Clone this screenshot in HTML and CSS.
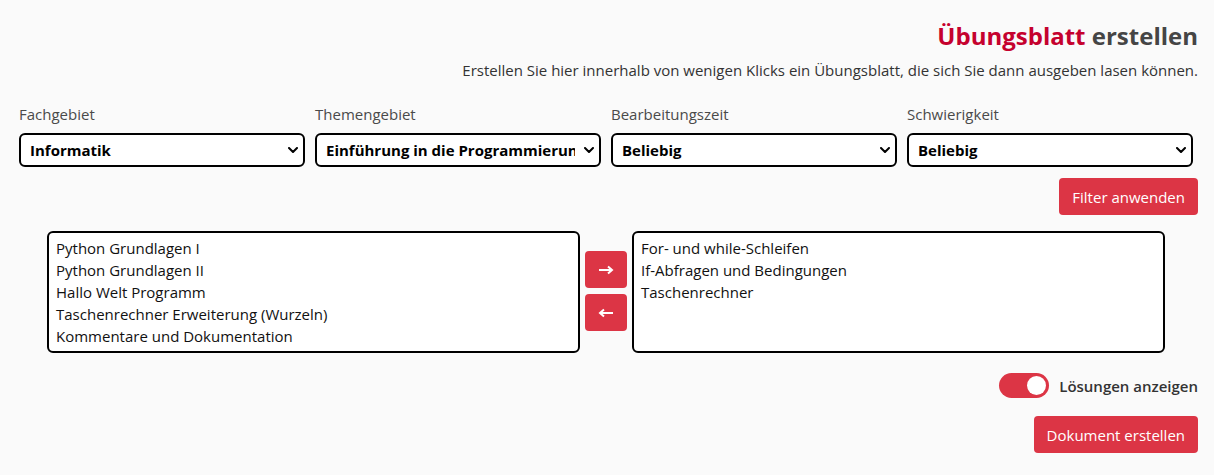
FILE: index.html
```html
<!DOCTYPE html>
<html lang="de">
<head>
<meta charset="utf-8">
<title>Übungsblatt erstellen</title>
<link rel="stylesheet" href="styles.css">
</head>
<body>
<main class="page">
  <header class="head">
    <h1 class="title"><span class="accent">Übungsblatt</span> erstellen</h1>
    <p class="lead">Erstellen Sie hier innerhalb von wenigen Klicks ein Übungsblatt, die sich Sie dann ausgeben lasen können.</p>
  </header>

  <section class="filters">
    <div class="field">
      <label class="label">Fachgebiet</label>
      <div class="select-wrap">
        <select class="select"><option>Informatik</option></select>
        <svg class="chev" width="10" height="6" viewBox="0 0 10 6"><path d="M1 1l4 4 4-4" fill="none" stroke="#000" stroke-width="2" stroke-linecap="round" stroke-linejoin="round"/></svg>
      </div>
    </div>
    <div class="field">
      <label class="label">Themengebiet</label>
      <div class="select-wrap">
        <select class="select"><option>Einführung in die Programmierung</option></select>
        <svg class="chev" width="10" height="6" viewBox="0 0 10 6"><path d="M1 1l4 4 4-4" fill="none" stroke="#000" stroke-width="2" stroke-linecap="round" stroke-linejoin="round"/></svg>
      </div>
    </div>
    <div class="field">
      <label class="label">Bearbeitungszeit</label>
      <div class="select-wrap">
        <select class="select"><option>Beliebig</option></select>
        <svg class="chev" width="10" height="6" viewBox="0 0 10 6"><path d="M1 1l4 4 4-4" fill="none" stroke="#000" stroke-width="2" stroke-linecap="round" stroke-linejoin="round"/></svg>
      </div>
    </div>
    <div class="field">
      <label class="label">Schwierigkeit</label>
      <div class="select-wrap">
        <select class="select"><option>Beliebig</option></select>
        <svg class="chev" width="10" height="6" viewBox="0 0 10 6"><path d="M1 1l4 4 4-4" fill="none" stroke="#000" stroke-width="2" stroke-linecap="round" stroke-linejoin="round"/></svg>
      </div>
    </div>
  </section>

  <div class="actions actions-filter">
    <button class="btn" type="button">Filter anwenden</button>
  </div>

  <section class="picker">
    <div class="listbox">
      <div class="item">Python Grundlagen I</div>
      <div class="item">Python Grundlagen II</div>
      <div class="item">Hallo Welt Programm</div>
      <div class="item">Taschenrechner Erweiterung (Wurzeln)</div>
      <div class="item">Kommentare und Dokumentation</div>
    </div>
    <div class="movers">
      <button class="btn btn-move" type="button" aria-label="Hinzufügen">
        <svg width="16" height="10" viewBox="0 0 16 10"><path d="M1 5h13M10 1.5L14 5l-4 3.5" fill="none" stroke="#fff" stroke-width="2" stroke-linejoin="miter"/></svg>
      </button>
      <button class="btn btn-move" type="button" aria-label="Entfernen">
        <svg width="16" height="10" viewBox="0 0 16 10"><path d="M15 5H2M6 1.5L2 5l4 3.5" fill="none" stroke="#fff" stroke-width="2" stroke-linejoin="miter"/></svg>
      </button>
    </div>
    <div class="listbox">
      <div class="item">For- und while-Schleifen</div>
      <div class="item">If-Abfragen und Bedingungen</div>
      <div class="item">Taschenrechner</div>
    </div>
  </section>

  <div class="switch-row">
    <span class="switch" role="switch" aria-checked="true"></span>
    <span class="switch-label">Lösungen anzeigen</span>
  </div>

  <div class="actions actions-doc">
    <button class="btn" type="button">Dokument erstellen</button>
  </div>
</main>
</body>
</html>
```

FILE: styles.css
```css
html, body {
  margin: 0;
  padding: 0;
  background: #fafafa;
}

body {
  font-family: "Open Sans", "Noto Sans", "Liberation Sans", sans-serif;
  font-size: 15px;
  line-height: 22px;
  color: #212529;
}

.page {
  padding: 21px 16px 0 19px;
}

.head {
  text-align: right;
}

.title {
  margin: 0;
  font-size: 24px;
  line-height: 29px;
  font-weight: 700;
  color: #454545;
}

.accent {
  color: #c5012e;
}

.lead {
  margin: 9px 0 0;
  color: #333;
}

.filters {
  display: grid;
  grid-template-columns: repeat(4, 1fr);
  column-gap: 10px;
  margin: 22px 5px 0 0;
}

.field {
  display: flex;
  flex-direction: column;
  gap: 8px;
}

.label {
  color: #4a4a4a;
}

.select-wrap {
  position: relative;
}

.select {
  appearance: none;
  -webkit-appearance: none;
  width: 100%;
  height: 34px;
  box-sizing: border-box;
  border: 2px solid #000;
  border-radius: 6px;
  background: #fff;
  padding: 0 24px 0 9px;
  font-family: inherit;
  font-size: 15px;
  font-weight: 700;
  color: #000;
}

.chev {
  position: absolute;
  right: 7px;
  top: 14px;
  pointer-events: none;
}

.actions {
  display: flex;
  justify-content: flex-end;
}

.actions-filter {
  margin-top: 11px;
}

.btn {
  border: 0;
  border-radius: 4px;
  background: #dc3545;
  color: #fff;
  font-family: inherit;
  font-size: 15px;
  height: 37px;
  padding: 0 13px;
  cursor: pointer;
}

.picker {
  display: flex;
  justify-content: center;
  gap: 5px;
  margin: 16px -14px 0 -19px;
}

.listbox {
  width: 533px;
  height: 122px;
  box-sizing: border-box;
  border: 2px solid #000;
  border-radius: 6px;
  background: #fff;
  padding: 4px 7px;
  color: #111;
}

.item {
  white-space: nowrap;
}

.movers {
  display: flex;
  flex-direction: column;
  gap: 6px;
  padding-top: 20px;
}

.btn-move {
  width: 42px;
  padding: 0;
  display: flex;
  align-items: center;
  justify-content: center;
}

.switch-row {
  display: flex;
  justify-content: flex-end;
  align-items: center;
  gap: 10px;
  margin-top: 20px;
}

.switch {
  position: relative;
  width: 50px;
  height: 25px;
  border-radius: 13px;
  background: #dc3545;
}

.switch::after {
  content: "";
  position: absolute;
  right: 3px;
  top: 3px;
  width: 19px;
  height: 19px;
  border-radius: 50%;
  background: #fff;
}

.switch-label {
  font-weight: 600;
  color: #333;
}

.actions-doc {
  margin-top: 18px;
}
```
